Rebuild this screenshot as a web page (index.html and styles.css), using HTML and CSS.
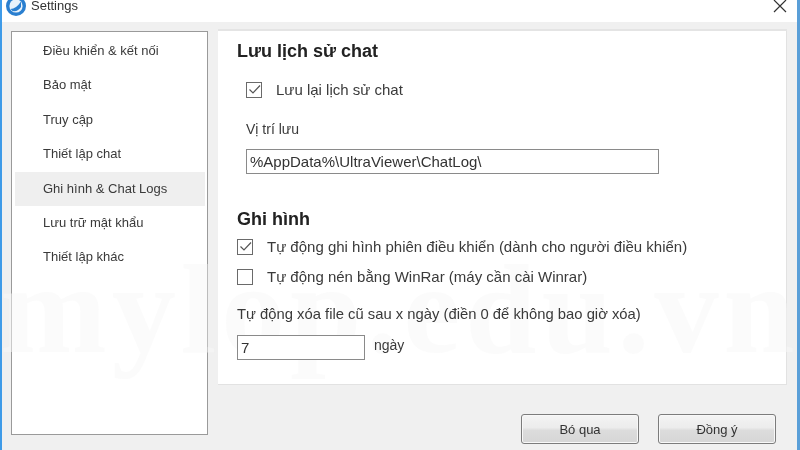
FILE: index.html
```html
<!DOCTYPE html>
<html lang="vi">
<head>
<meta charset="utf-8">
<title>Settings</title>
<link rel="stylesheet" href="styles.css">
</head>
<body>
<div class="window">
  <header class="titlebar">
    <div class="title-left">
      <svg class="app-icon" width="20" height="20" viewBox="0 0 20 20">
        <circle cx="10" cy="8" r="10" fill="#2a7fd0"/>
        <circle cx="10" cy="8" r="6.6" fill="#e8f2fb"/>
        <path d="M4.5 11 Q10 11 15 3.5 L15 9 Q12 14 6.5 13 Z" fill="#2a7fd0"/>
      </svg>
      <span class="title-text">Settings</span>
    </div>
    <svg class="close" width="14" height="14" viewBox="0 0 14 14">
      <path d="M1 0 L13 12 M13 0 L1 12" stroke="#333" stroke-width="1.2" fill="none"/>
    </svg>
  </header>
  <div class="content">
    <div class="columns">
      <nav class="sidebar">
        <div class="nav-item">Điều khiển &amp; kết nối</div>
        <div class="nav-item">Bảo mật</div>
        <div class="nav-item">Truy cập</div>
        <div class="nav-item">Thiết lập chat</div>
        <div class="nav-item active">Ghi hình &amp; Chat Logs</div>
        <div class="nav-item">Lưu trữ mật khẩu</div>
        <div class="nav-item">Thiết lập khác</div>
      </nav>
      <div class="right">
        <main class="panel">
          <h2 class="heading">Lưu lịch sử chat</h2>
          <label class="check check-top">
            <span class="box"><svg width="13" height="13" viewBox="0 0 13 13"><path d="M1.5 6.5 L5 10 L12 2.5" stroke="#555" stroke-width="1.2" fill="none"/></svg></span>
            <span class="check-text">Lưu lại lịch sử chat</span>
          </label>
          <div class="field-label">Vị trí lưu</div>
          <div class="input path-input">%AppData%\UltraViewer\ChatLog\</div>
          <h2 class="heading heading-two">Ghi hình</h2>
          <label class="check check-rec">
            <span class="box"><svg width="13" height="13" viewBox="0 0 13 13"><path d="M1.5 6.5 L5 10 L12 2.5" stroke="#555" stroke-width="1.2" fill="none"/></svg></span>
            <span class="check-text">Tự động ghi hình phiên điều khiển (dành cho người điều khiển)</span>
          </label>
          <label class="check check-zip">
            <span class="box"></span>
            <span class="check-text">Tự động nén bằng WinRar (máy cần cài Winrar)</span>
          </label>
          <div class="auto-label">Tự động xóa file cũ sau x ngày (điền 0 để không bao giờ xóa)</div>
          <div class="days-row">
            <div class="input days-input">7</div>
            <span class="days-unit">ngày</span>
          </div>
        </main>
        <footer class="actions">
          <button class="btn">Bó qua</button>
          <button class="btn">Đồng ý</button>
        </footer>
      </div>
    </div>
  </div>
  <div class="watermark">mylop.edu.vn</div>
</div>
</body>
</html>
```

FILE: styles.css
```css
* { box-sizing: border-box; }
html, body { margin: 0; padding: 0; }
body {
  width: 800px;
  height: 450px;
  overflow: hidden;
  font-family: "Liberation Sans", Arial, sans-serif;
  color: #333;
}
.window {
  position: relative;
  width: 800px;
  height: 450px;
  background: #f0f0f0;
  border-left: 2px solid #3f9be8;
  border-right: 3px solid #5a9fd8;
  display: flex;
  flex-direction: column;
  overflow: hidden;
  filter: blur(0.35px);
}
.titlebar {
  height: 22px;
  flex: none;
  background: #fff;
  display: flex;
  align-items: flex-start;
  justify-content: space-between;
  padding-right: 10px;
}
.title-left { display: flex; align-items: flex-start; gap: 5px; padding-left: 4px; }
.app-icon { margin-top: -2px; }
.title-text { font-size: 13px; line-height: 12px; color: #333; }
.content { flex: 1; padding: 9px 0 0 9px; }
.columns { display: flex; gap: 10px; height: 100%; }
.sidebar {
  width: 197px;
  height: 404px;
  background: #fff;
  border: 1px solid #9a9a9a;
  padding: 2px 0 0 3px;
  flex: none;
  position: relative;
}
.nav-item {
  height: 34.4px;
  line-height: 34px;
  font-size: 13px;
  padding-left: 28px;
  margin-right: 2px;
  color: #3a3a3a;
  position: relative;
  z-index: 2;
}
.nav-item.active { background: #efefef; }
.right { width: 569px; display: flex; flex-direction: column; }
.panel {
  height: 354px;
  background: #fff;
  border-right: 1px solid #e2e2e2;
  border-bottom: 1px solid #e2e2e2;
  padding: 10px 0 0 19px;
  box-shadow: 0 -2px 0 #e4e4e4;
}
.panel > * { position: relative; z-index: 2; }
.heading { margin: 0; font-size: 18px; line-height: 21px; font-weight: bold; color: #222; }
.heading-two { margin-top: 35px; }
.check { display: flex; align-items: center; gap: 14px; height: 17px; color: #3a3a3a; }
.check-top { margin: 19px 0 0 9px; }
.check-rec { margin-top: 8px; }
.check-zip { margin-top: 13px; }
.box {
  width: 16px;
  height: 16px;
  flex: none;
  border: 1px solid #6a6a6a;
  background: #fff;
  display: flex;
  align-items: center;
  justify-content: center;
}
.check-text { font-size: 15px; line-height: 17px; white-space: nowrap; }
.field-label { margin: 23px 0 0 9px; font-size: 14px; line-height: 16px; color: #3a3a3a; }
.input {
  background: #fff;
  border: 1px solid #8a8a8a;
  color: #333;
  white-space: nowrap;
}
.path-input {
  margin: 12px 0 0 9px;
  width: 413px;
  height: 25px;
  font-size: 15px;
  line-height: 23px;
  padding-left: 3px;
}
.auto-label { margin-top: 21px; font-size: 14.8px; line-height: 16px; color: #3a3a3a; white-space: nowrap; }
.days-row { display: flex; align-items: flex-start; gap: 9px; margin-top: 13px; }
.days-input {
  width: 128px;
  height: 25px;
  font-size: 15px;
  line-height: 23px;
  padding-left: 3px;
}
.days-unit { font-size: 14px; line-height: 16px; margin-top: 2px; color: #3a3a3a; }
.actions { display: flex; gap: 19px; margin: 29px 0 0 303px; }
.btn {
  width: 118px;
  height: 30px;
  font-family: "Liberation Sans", Arial, sans-serif;
  font-size: 13px;
  color: #333;
  border: 1px solid #7c7c7c;
  border-radius: 3px;
  background: linear-gradient(#f4f4f4 0%, #ececec 45%, #dcdcdc 55%, #d6d6d6 100%);
  box-shadow: inset 0 0 0 1px #f8f8f8;
  padding: 0;
}
.watermark {
  position: absolute;
  z-index: 1;
  left: -2px;
  top: 234px;
  font-family: "Liberation Serif", serif;
  font-weight: bold;
  font-size: 128px;
  line-height: 150px;
  letter-spacing: 5px;
  color: rgba(248, 248, 248, 0.5);
  white-space: nowrap;
  pointer-events: none;
}
```
